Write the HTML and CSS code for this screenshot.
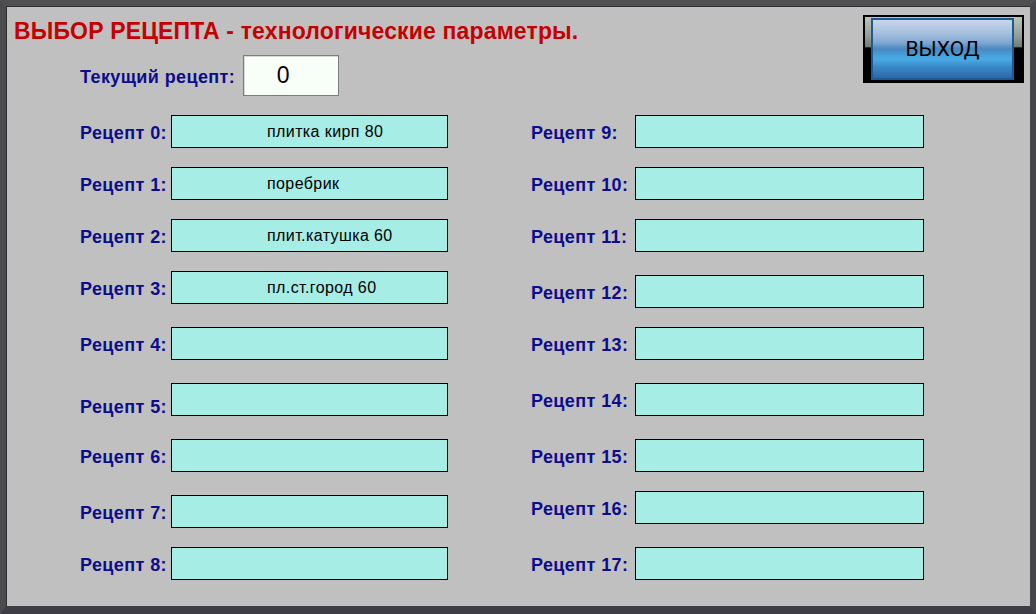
FILE: index.html
```html
<!DOCTYPE html>
<html lang="ru">
<head>
<meta charset="utf-8">
<title>Выбор рецепта</title>
<link rel="stylesheet" href="styles.css">
</head>
<body>
<div class="screen">
  <header class="top">
    <div class="head-left">
      <h1 class="title">ВЫБОР РЕЦЕПТА - технологические параметры.</h1>
      <div class="current">
        <span class="label">Текущий рецепт:</span>
        <div class="current-box">0</div>
      </div>
    </div>
    <div class="exit-frame"><button class="exit" type="button">ВЫХОД</button></div>
  </header>

  <main class="recipes">
    <div class="col col-left">
      <div class="row"><span class="label">Рецепт 0:</span><div class="field">плитка кирп 80</div></div>
      <div class="row"><span class="label">Рецепт 1:</span><div class="field">поребрик</div></div>
      <div class="row"><span class="label">Рецепт 2:</span><div class="field">плит.катушка 60</div></div>
      <div class="row"><span class="label">Рецепт 3:</span><div class="field">пл.ст.город 60</div></div>
      <div class="row wide"><span class="label">Рецепт 4:</span><div class="field"></div></div>
      <div class="row wide"><span class="label label-low">Рецепт 5:</span><div class="field"></div></div>
      <div class="row wide"><span class="label">Рецепт 6:</span><div class="field"></div></div>
      <div class="row wide"><span class="label">Рецепт 7:</span><div class="field"></div></div>
      <div class="row"><span class="label">Рецепт 8:</span><div class="field"></div></div>
    </div>
    <div class="col col-right">
      <div class="row"><span class="label">Рецепт 9:</span><div class="field"></div></div>
      <div class="row"><span class="label">Рецепт 10:</span><div class="field"></div></div>
      <div class="row"><span class="label">Рецепт 11:</span><div class="field"></div></div>
      <div class="row wide"><span class="label">Рецепт 12:</span><div class="field"></div></div>
      <div class="row"><span class="label">Рецепт 13:</span><div class="field"></div></div>
      <div class="row wide"><span class="label">Рецепт 14:</span><div class="field"></div></div>
      <div class="row wide"><span class="label">Рецепт 15:</span><div class="field"></div></div>
      <div class="row"><span class="label">Рецепт 16:</span><div class="field"></div></div>
      <div class="row wide"><span class="label">Рецепт 17:</span><div class="field"></div></div>
    </div>
  </main>
</div>
</body>
</html>
```

FILE: styles.css
```css
* {
  box-sizing: border-box;
}

html,
body {
  margin: 0;
}

body {
  width: 1036px;
  height: 614px;
  overflow: hidden;
  background: #46464a;
  font-family: "Liberation Sans", Arial, sans-serif;
}

/* Panel frame */
.screen {
  width: 1036px;
  height: 614px;
  border-style: solid;
  border-width: 6px 6px 8px 6px;
  border-color: #505052 #46464a #3e3d46 #4c4c4e;
  background: #c0c0c0;
  box-shadow: inset 1px 1px 0 #2e2e30;
  display: flex;
  flex-direction: column;
}

/* Header: title, current recipe, exit button */
.top {
  height: 109px;
  display: flex;
  justify-content: space-between;
  align-items: flex-start;
}

.head-left {
  padding: 12px 0 0 8px;
}

.title {
  margin: 0;
  font-size: 23px;
  line-height: 27px;
  font-weight: bold;
  letter-spacing: 0.15px;
  color: #c40000;
  white-space: nowrap;
}

.current {
  display: flex;
  align-items: center;
  margin: 10px 0 0 66px;
}

.current-box {
  margin-left: 8px;
  width: 96px;
  height: 41px;
  border: 1px solid #7c7c7c;
  box-shadow: inset 1px 1px 0 #d8d8d8;
  background: #f8fff9;
  font-size: 23px;
  line-height: 39px;
  text-align: center;
  color: #000;
  padding-right: 16px;
}

.exit-frame {
  margin: 9px 6px 0 0;
  width: 161px;
  height: 68px;
  border: 2px solid #000;
  padding: 1px 8px 1px 6px;
  background: linear-gradient(#bcc4bc 0%, #949c94 30%, #737c72 47%, #000 48%, #000 100%);
}

.exit {
  display: block;
  width: 143px;
  height: 62px;
  padding: 0;
  border: 2px solid #1b5a97;
  background: linear-gradient(
    #c6d6e8 0%,
    #a7c1de 22%,
    #7ea6d2 40%,
    #5b92c6 46%,
    #4a88c2 50%,
    #47a2dc 62%,
    #48aae4 68%,
    #3a86c4 82%,
    #2b68a8 100%
  );
  font-family: Roboto, "Liberation Sans", sans-serif;
  font-size: 21px;
  color: #000;
  cursor: pointer;
}

/* Recipe list */
.recipes {
  display: flex;
  padding-left: 74px;
}

.col {
  display: flex;
  flex-direction: column;
  gap: 19px;
}

.col-left {
  width: 368px;
}

.col-right {
  width: 393px;
  margin-left: 83px;
}

.row {
  height: 33px;
  display: flex;
  align-items: center;
}

.row.wide {
  margin-top: 4px;
}

.label {
  font-size: 18px;
  font-weight: bold;
  color: #0c0c8c;
  letter-spacing: 0.4px;
  white-space: nowrap;
  padding-top: 3px;
}

.col-left .label {
  width: 91px;
}

.col-right .label {
  width: 104px;
}

.label-low {
  margin-top: 12px;
}

.field {
  flex: 1;
  height: 33px;
  border: 1px solid #000;
  background: #a6ede6;
  font-size: 16px;
  line-height: 31px;
  letter-spacing: 0.4px;
  padding-left: 95px;
  color: #000;
  white-space: nowrap;
}
```
